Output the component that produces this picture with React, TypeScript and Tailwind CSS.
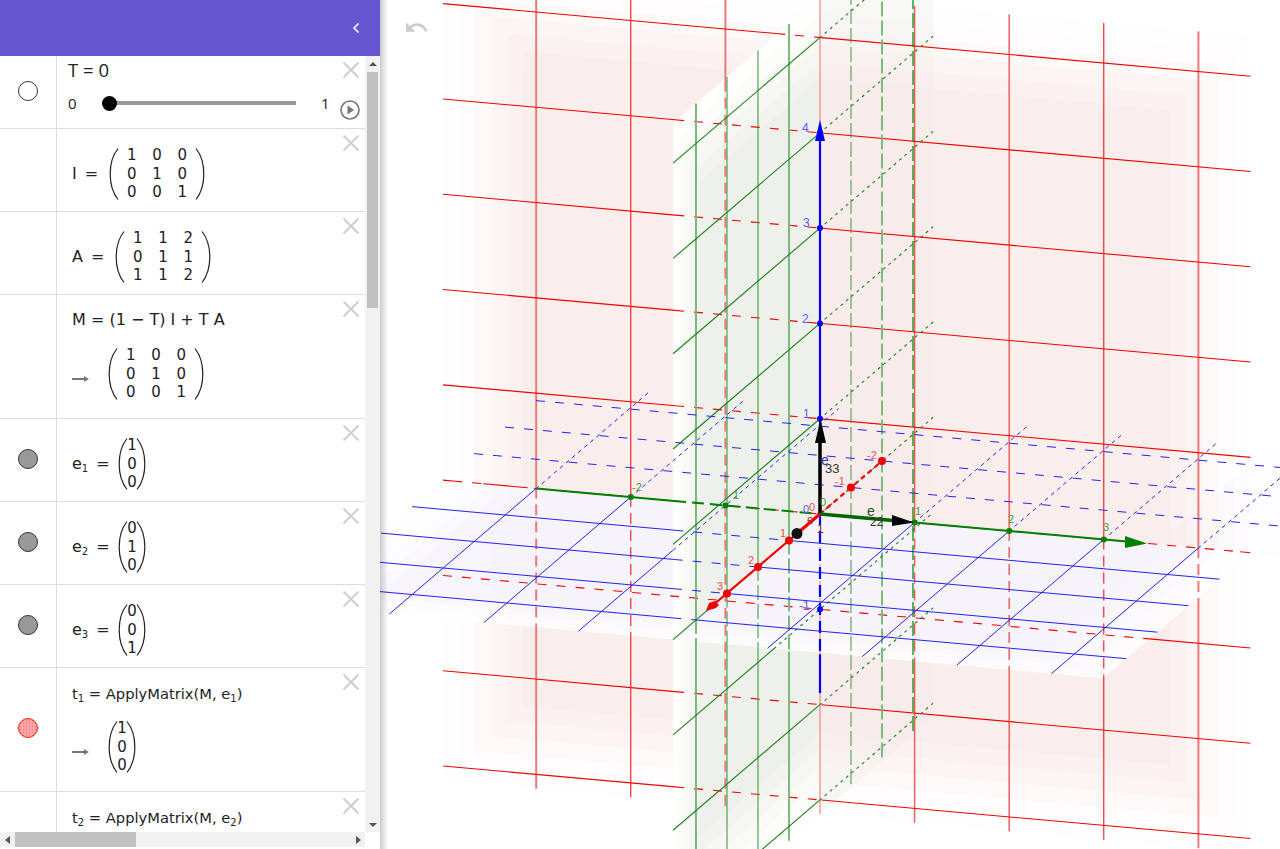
import { ChevronLeft } from 'lucide-react';
import { MdUndo } from 'react-icons/md';
import type { ReactNode } from 'react';

type Pt = [number, number];
type Vec3 = [number, number, number];

const P = (x: number, y: number, z: number): Pt => [820 - 31 * x + 94.6 * y, 514 + 26.5 * x + 8.5 * y - 95.3 * z];

const Y0 = -3.985;
const Y1 = 4.55;
const X0 = -3.65;
const X1 = 4.74;
const Z0 = -3.15;
const Z1 = 5.42;

const pts = (list: Pt[]) => list.map((p) => p.join(',')).join(' ');

const inside = (p: Pt, poly: Pt[]) => {
    let hit = false;
    for (let i = 0, j = poly.length - 1; i < poly.length; j = i++) {
        const [xi, yi] = poly[i];
        const [xj, yj] = poly[j];
        if (yi > p[1] !== yj > p[1] && p[0] < ((xj - xi) * (p[1] - yi)) / (yj - yi) + xi) hit = !hit;
    }
    return hit;
};

const greenFront = [P(0, 0, Z1), P(X1, 0, Z1), P(X1, 0, Z0), P(0, 0, Z0)];
const blueFront = [P(0, Y0, 0), P(0, Y1, 0), P(X1, Y1, 0), P(X1, Y0, 0)];

// a line in 3D, cut in visible and hidden pieces
const Line3 = ({
    a,
    b,
    hidden,
    color,
    width = 1,
    dash = '9 10',
}: {
    a: Vec3;
    b: Vec3;
    hidden: (v: Vec3, s: Pt) => boolean;
    color: string;
    width?: number;
    dash?: string;
}) => {
    const steps = 160;
    const parts: { from: Pt; to: Pt; off: boolean }[] = [];
    const at = (t: number): Vec3 => [a[0] + (b[0] - a[0]) * t, a[1] + (b[1] - a[1]) * t, a[2] + (b[2] - a[2]) * t];
    for (let i = 0; i < steps; i++) {
        const mid = at((i + 0.5) / steps);
        const off = hidden(mid, P(...mid));
        const from = P(...at(i / steps));
        const to = P(...at((i + 1) / steps));
        const last = parts[parts.length - 1];
        if (last && last.off === off) last.to = to;
        else parts.push({ from, to, off });
    }
    return (
        <>
            {parts.map((s, i) => (
                <line
                    key={i}
                    x1={s.from[0]}
                    y1={s.from[1]}
                    x2={s.to[0]}
                    y2={s.to[1]}
                    stroke={color}
                    strokeWidth={width}
                    strokeDasharray={s.off ? dash : undefined}
                />
            ))}
        </>
    );
};

const redHidden = (_: Vec3, s: Pt) => inside(s, greenFront) || inside(s, blueFront);
const greenHidden = (v: Vec3, s: Pt) => v[0] < 0 || (v[2] < 0 && inside(s, blueFront));
const blueHidden = (v: Vec3, s: Pt) => v[0] < 0 || (v[1] < 0 && inside(s, greenFront));

// the planes fade out to their edges in a few steps
const LAYERS = [0.06, 0.1, 0.15, 0.2, 0.3, 0.35];

const Planes = () => (
    <>
        {/* back halves show through the red plane */}
        <polygon points={pts([P(0, Y1 - 1, 0), P(0, Y1 + 1, 0), P(X0, Y1 + 1, 0), P(X0, Y1 - 1, 0)])} fill="#f6f2fb" opacity="0.25" />
        <polygon points={pts([P(0, 0, Z1), P(X0, 0, Z1), P(X0, 0, Z0), P(0, 0, Z0)])} fill="#e9ece4" opacity="0.3" />

        {LAYERS.map((o, i) => {
            const d = i * 0.17;
            return (
                <polygon
                    key={i}
                    points={pts([P(0, Y0 + d, Z1 - d), P(0, Y1 - d, Z1 - d), P(0, Y1 - d, Z0 + d), P(0, Y0 + d, Z0 + d)])}
                    fill="#fae8e7"
                    opacity={o}
                />
            );
        })}

        <polygon points={pts([P(0, 0, 0), P(X1, 0, 0), P(X1, 0, Z0), P(0, 0, Z0)])} fill="#ffffff" />
        {LAYERS.map((o, i) => {
            const d = i * 0.17;
            return (
                <polygon
                    key={i}
                    points={pts([P(0, 0, 0), P(X1 - d, 0, 0), P(X1 - d, 0, Z0 + d), P(0, 0, Z0 + d)])}
                    fill="#e9ece4"
                    opacity={o}
                />
            );
        })}

        <polygon points={pts(blueFront)} fill="#ffffff" opacity="0.8" />
        {LAYERS.map((o, i) => {
            const d = i * 0.17;
            return (
                <polygon
                    key={i}
                    points={pts([P(0, Y0 + d, 0), P(0, Y1 - d, 0), P(X1 - d, Y1 - d, 0), P(X1 - d, Y0 + d, 0)])}
                    fill="#f6f2fb"
                    opacity={o}
                />
            );
        })}

        <polygon points={pts([P(0, 0, Z1), P(X1, 0, Z1), P(X1, 0, 0), P(0, 0, 0)])} fill="#ffffff" />
        {LAYERS.map((o, i) => {
            const d = i * 0.17;
            return (
                <polygon
                    key={i}
                    points={pts([P(0, 0, Z1 - d), P(X1 - d, 0, Z1 - d), P(X1 - d, 0, 0), P(0, 0, 0)])}
                    fill="#e9ece4"
                    opacity={o}
                />
            );
        })}
    </>
);

const redVertical: Record<number, [string, number]> = {
    [-3]: ['#e77b7b', 2],
    [-2]: ['#f00000', 1],
    [-1]: ['#e77b7b', 2],
    0: ['#f07070', 1],
    1: ['#ea5f5f', 1.5],
    2: ['#ea5f5f', 1.5],
    3: ['#f00000', 1],
    4: ['#e77b7b', 2],
};

const greenVertical: Record<number, [string, number]> = {
    4: ['#7cb97c', 2],
    3: ['#2f962f', 1],
    2: ['#2f962f', 1],
    1: ['#7cb97c', 2],
    [-1]: ['#4a8f4a', 1],
    [-2]: ['#7cb97c', 2],
    [-3]: ['#008000', 1.2],
};

const Grid = () => (
    <>
        {[-3, -2, -1, 0, 1, 2, 3, 4].map((k) => (
            <Line3
                key={k}
                a={[0, k, Z1]}
                b={[0, k, Z0]}
                hidden={redHidden}
                color={redVertical[k][0]}
                width={redVertical[k][1]}
                dash="11 6"
            />
        ))}
        {[-3, -2, -1, 0, 1, 2, 3, 4, 5].map((k) => (
            <Line3 key={k} a={[0, Y0, k]} b={[0, Y1, k]} hidden={redHidden} color="#f00000" width={1.1} />
        ))}

        {[4, 3, 2, 1, -1, -2, -3].map((k) => (
            <Line3
                key={k}
                a={[k, 0, Z1]}
                b={[k, 0, Z0]}
                hidden={greenHidden}
                color={greenVertical[k][0]}
                width={greenVertical[k][1]}
                dash="15 4"
            />
        ))}
        {[-3, -2, -1, 0, 1, 2, 3, 4, 5].map((k) => (
            <Line3 key={k} a={[X1, 0, k]} b={[X0, 0, k]} hidden={greenHidden} color="#1a801a" width={1.1} dash="3 4" />
        ))}

        {[4, 3, 2, 1, -1, -2, -3].map((k) => (
            <Line3 key={k} a={[k, Y0, 0]} b={[k, Y1, 0]} hidden={blueHidden} color="#2222f0" width={1} />
        ))}
        {[-3, -2, -1, 1, 2, 3, 4].map((k) => (
            <Line3 key={k} a={[X1, k, 0]} b={[X0, k, 0]} hidden={blueHidden} color="#2222f0" dash="4 4" />
        ))}
    </>
);

const Dots = ({ list, color, r = 4 }: { list: Pt[]; color: string; r?: number }) => (
    <>
        {list.map(([cx, cy], i) => (
            <circle key={i} cx={cx} cy={cy} r={r} fill={color} />
        ))}
    </>
);

const Label = ({ x, y, color, children, size = 11 }: { x: number; y: number; color: string; children: ReactNode; size?: number }) => (
    <text x={x} y={y} fill={color} fontSize={size} fontFamily="'Liberation Sans', sans-serif">
        {children}
    </text>
);

const Axes = () => (
    <>
        {/* z axis */}
        <Line3
            a={[0, 0, 4.05]}
            b={[0, 0, -1.88]}
            hidden={(_, s) => inside(s, blueFront)}
            color="#0000f0"
            width={2.2}
            dash="12 6"
        />
        <polygon points="820,120 815,141 825,141" fill="#0000f0" />
        <Dots list={[P(0, 0, 1), P(0, 0, 2), P(0, 0, 3), P(0, 0, 4), P(0, 0, -1)]} color="#0000f0" r={3} />

        {/* y axis */}
        <Line3
            a={[0, -3, 0]}
            b={[0, 3.3, 0]}
            hidden={(_, s) => inside(s, greenFront)}
            color="#008000"
            width={2}
            dash="12 6"
        />
        <polygon points="1147,543.5 1125,536 1125,548" fill="#008000" />
        <Dots list={[P(0, -2, 0), P(0, -1, 0), P(0, 1, 0), P(0, 2, 0), P(0, 3, 0)]} color="#008000" r={3} />

        {/* x axis */}
        <line x1="820" y1="514" x2="712" y2="606" stroke="#f00000" strokeWidth="2.2" />
        <line x1="820" y1="514" x2="882" y2="461" stroke="#f00000" strokeWidth="2.2" strokeDasharray="5 4" />
        <polygon points="706,611 709,603 715,601 719,605 716,608" fill="#f00000" />
        <Dots list={[P(1, 0, 0), P(2, 0, 0), P(3, 0, 0), P(-1, 0, 0), P(-2, 0, 0)]} color="#f00000" />

        {/* basis vectors */}
        <line x1="820" y1="514" x2="820" y2="441" stroke="#000000" strokeWidth="3.5" />
        <polygon points="820.5,419 815,443 826,443" fill="#000000" />
        <line x1="820" y1="514" x2="893" y2="520.5" stroke="#006600" strokeWidth="3.5" />
        <polygon points="914,522.5 892,515 892,526" fill="#000000" />
        <line x1="820" y1="514" x2="800" y2="531" stroke="#f00000" strokeWidth="3" />
        <circle cx="797" cy="533.5" r="5.5" fill="#111111" />

        <Label x={802} y={132} color="#5a5aff" size={12}>4</Label>
        <Label x={803} y={227} color="#5a5aff" size={12}>3</Label>
        <Label x={802} y={323} color="#5a5aff" size={12}>2</Label>
        <Label x={803} y={418} color="#5a5aff" size={12}>1</Label>
        <Label x={799} y={610} color="#5a5aff" size={12}>-1</Label>

        <Label x={780} y={537} color="#f05050">1</Label>
        <Label x={748} y={564} color="#f05050">2</Label>
        <Label x={717} y={590} color="#f05050">3</Label>
        <Label x={835} y={485} color="#f05050">-1</Label>
        <Label x={867} y={459} color="#f05050">-2</Label>

        <Label x={632} y={491} color="#3f9f3f">-2</Label>
        <Label x={733} y={499} color="#3f9f3f">1</Label>
        <Label x={915} y={515} color="#3f9f3f">1</Label>
        <Label x={1008} y={523} color="#3f9f3f">2</Label>
        <Label x={1103} y={531} color="#3f9f3f">3</Label>

        <Label x={803} y={513} color="#5a5aff" size={11}>0</Label>
        <Label x={809} y={511} color="#f05050" size={11}>0</Label>
        <Label x={820} y={506} color="#3f9f3f" size={11}>0</Label>

        <Label x={821} y={465} color="#3333aa" size={14}>e</Label>
        <Label x={825} y={473} color="#333333" size={13}>33</Label>
        <Label x={867} y={516} color="#225522" size={14}>e</Label>
        <Label x={870} y={526} color="#333333" size={12}>22</Label>
        <Label x={807} y={524} color="#aa3333" size={12}>e</Label>
        <Label x={817} y={533} color="#772222" size={12}>1</Label>
    </>
);

const CloseX = () => (
    <svg className="absolute top-[6px] right-[6px] h-4 w-4" viewBox="0 0 16 16" stroke="#cfcfcf" strokeWidth="2" fill="none">
        <path d="M0.5 0.5 L15.5 15.5 M15.5 0.5 L0.5 15.5" />
    </svg>
);

const Paren = ({ flip = false }: { flip?: boolean }) => (
    <svg className={flip ? 'h-[52px] w-[10px] -scale-x-100' : 'h-[52px] w-[10px]'} viewBox="0 0 10 52" fill="none" stroke="#222222" strokeWidth="1.2">
        <path d="M9 0.5 C3 8 1.2 17 1.2 26 C1.2 35 3 44 9 51.5" />
    </svg>
);

const Matrix = ({ rows }: { rows: string[][] }) => (
    <div className="flex items-center">
        <Paren />
        <div className={rows[0].length === 3 ? 'grid w-[76px] grid-cols-3' : 'grid w-[8px] grid-cols-1 justify-items-center'}>
            {rows.flat().map((d, i) => (
                <span key={i} className="h-[18.5px] text-center text-[15px] leading-[18.5px]">
                    {d}
                </span>
            ))}
        </div>
        <Paren flip />
    </div>
);

const Arrow = () => (
    <svg className="h-[6px] w-[17px] translate-y-[5px]" viewBox="0 0 17 6" fill="#777777">
        <rect x="0" y="2" width="13" height="2" />
        <path d="M12 0 L17 3 L12 6 Z" />
    </svg>
);

const Marble = ({ kind }: { kind?: 'empty' | 'gray' | 'red' }) => {
    if (!kind) return null;
    if (kind === 'empty') return <div className="h-5 w-5 rounded-full border border-[#333333] bg-white" />;
    if (kind === 'gray') return <div className="h-5 w-5 rounded-full border border-[#333333] bg-[#999999]" />;
    return (
        <div className="h-5 w-5 rounded-full border border-[#ee1c1c] bg-[#ffa3a3] bg-[radial-gradient(#f87171_1px,transparent_1px)] bg-[length:3px_3px]" />
    );
};

const Row = ({ h, kind, children }: { h: string; kind?: 'empty' | 'gray' | 'red'; children: ReactNode }) => (
    <div className={`flex shrink-0 border-b border-[#dddddd] ${h}`}>
        <div className="flex w-[57px] shrink-0 items-center justify-center border-r border-[#dddddd] pb-[3px]">
            <Marble kind={kind} />
        </div>
        <div className="relative flex-1">
            <CloseX />
            {children}
        </div>
    </div>
);

const Sub = ({ children }: { children: ReactNode }) => <sub className="text-[10px]">{children}</sub>;

const Lead = ({ name, className }: { name: ReactNode; className: string }) => (
    <span className={`flex shrink-0 gap-[8px] text-[16px] ${className}`}>
        <span>{name}</span>
        <span>=</span>
    </span>
);

const Triangle = ({ path }: { path: string }) => (
    <svg className="h-2 w-2" viewBox="0 0 8 8" fill="#555555">
        <path d={path} />
    </svg>
);

const PlayButton = () => (
    <svg className="absolute top-[44px] right-[5px] h-5 w-5" viewBox="0 0 20 20">
        <circle cx="10" cy="10" r="9" fill="none" stroke="#757575" strokeWidth="1.6" />
        <path d="M7.5 5.5 L14 10 L7.5 14.5 Z" fill="#757575" />
    </svg>
);

const Algebra = () => (
    <aside className="flex h-full w-[380px] shrink-0 flex-col bg-white">
        <div className="flex h-[56px] shrink-0 items-center justify-end bg-[#6557d2] pr-[16px] text-white">
            <ChevronLeft size={16} strokeWidth={2.5} />
        </div>
        <div className="flex min-h-0 flex-1">
            <div className="flex w-[365px] shrink-0 flex-col">
                <div className="flex h-[776px] flex-col overflow-hidden font-['DejaVu_Sans',sans-serif] text-[14.7px] text-[#222222]">
                    <Row h="h-[73px]" kind="empty">
                        <div className="pt-[3px] pl-[11px] font-['Open_Sans',sans-serif]">
                            <div className="h-[22px] text-[18.5px] leading-[22px]">T = 0</div>
                            <div className="mt-[12px] flex h-[20px] items-center text-[15px]">
                                <span className="w-[42px]">0</span>
                                <div className="relative h-[4px] w-[186px] bg-[#999999]">
                                    <div className="absolute -top-[5.5px] -left-[8px] h-[15px] w-[15px] rounded-full bg-black" />
                                </div>
                                <span className="ml-[25px]">1</span>
                            </div>
                        </div>
                        <PlayButton />
                    </Row>
                    <Row h="h-[83px]">
                        <div className="flex h-full items-center pt-[8px] pl-[15px]">
                            <Lead name="I" className="w-[37px]" />
                            <Matrix rows={[['1', '0', '0'], ['0', '1', '0'], ['0', '0', '1']]} />
                        </div>
                    </Row>
                    <Row h="h-[83px]">
                        <div className="flex h-full items-center pt-[8px] pl-[15px]">
                            <Lead name="A" className="w-[43px]" />
                            <Matrix rows={[['1', '1', '2'], ['0', '1', '1'], ['1', '1', '2']]} />
                        </div>
                    </Row>
                    <Row h="h-[124px]">
                        <div className="pt-[15px] pl-[15px]">
                            <div className="h-[20px] text-[16px] leading-[20px]">M = (1 − T) I + T A</div>
                            <div className="mt-[16px] flex items-center">
                                <div className="flex w-[36px]">
                                    <Arrow />
                                </div>
                                <Matrix rows={[['1', '0', '0'], ['0', '1', '0'], ['0', '0', '1']]} />
                            </div>
                        </div>
                    </Row>
                    <Row h="h-[83px]" kind="gray">
                        <div className="flex h-full items-center pt-[8px] pl-[15px]">
                            <Lead name={<>e<Sub>1</Sub></>} className="w-[46px]" />
                            <Matrix rows={[['1'], ['0'], ['0']]} />
                        </div>
                    </Row>
                    <Row h="h-[83px]" kind="gray">
                        <div className="flex h-full items-center pt-[8px] pl-[15px]">
                            <Lead name={<>e<Sub>2</Sub></>} className="w-[46px]" />
                            <Matrix rows={[['0'], ['1'], ['0']]} />
                        </div>
                    </Row>
                    <Row h="h-[83px]" kind="gray">
                        <div className="flex h-full items-center pt-[8px] pl-[15px]">
                            <Lead name={<>e<Sub>3</Sub></>} className="w-[46px]" />
                            <Matrix rows={[['0'], ['0'], ['1']]} />
                        </div>
                    </Row>
                    <Row h="h-[124px]" kind="red">
                        <div className="pt-[16px] pl-[15px]">
                            <div className="h-[20px] leading-[20px]">t<Sub>1</Sub> = ApplyMatrix(M, e<Sub>1</Sub>)</div>
                            <div className="mt-[15px] flex items-center">
                                <div className="flex w-[36px]">
                                    <Arrow />
                                </div>
                                <Matrix rows={[['1'], ['0'], ['0']]} />
                            </div>
                        </div>
                    </Row>
                    <Row h="h-[124px]">
                        <div className="pt-[16px] pl-[15px]">
                            <div className="h-[20px] leading-[20px]">t<Sub>2</Sub> = ApplyMatrix(M, e<Sub>2</Sub>)</div>
                        </div>
                    </Row>
                </div>
                {/* horizontal scrollbar */}
                <div className="flex h-[15px] shrink-0 items-center bg-[#f1f1f1]">
                    <div className="flex w-[15px] justify-center">
                        <Triangle path="M6 0 L6 8 L1 4 Z" />
                    </div>
                    <div className="h-full w-[121px] bg-[#c1c1c1]" />
                    <div className="flex-1" />
                    <div className="flex w-[15px] justify-center">
                        <Triangle path="M2 0 L2 8 L7 4 Z" />
                    </div>
                </div>
            </div>
            {/* vertical scrollbar */}
            <div className="flex h-[776px] w-[15px] shrink-0 flex-col items-center bg-[#f1f1f1] px-[1px]">
                <div className="flex h-[15.5px] shrink-0 items-center">
                    <Triangle path="M0 6 L8 6 L4 2 Z" />
                </div>
                <div className="h-[236px] w-[11px] shrink-0 bg-[#c1c1c1]" />
                <div className="flex-1" />
                <div className="flex h-[15px] shrink-0 items-center">
                    <Triangle path="M0 2 L8 2 L4 6 Z" />
                </div>
            </div>
        </div>
    </aside>
);

const App = () => {
    return (
        <div className="flex h-[849px] w-[1280px] overflow-hidden bg-white">
            <Algebra />
            <main className="relative h-full flex-1 overflow-hidden bg-white">
                <svg className="block h-full w-full" viewBox="380 0 900 849" fill="none">
                    <Planes />
                    <Grid />
                    <Axes />
                </svg>
                <div className="absolute top-0 bottom-0 left-0 w-[8px] bg-linear-to-r from-black/20 to-transparent" />
                <MdUndo className="absolute top-[15px] left-[24px] text-[#cccccc]" size={25} />
            </main>
        </div>
    );
};

export default App;
